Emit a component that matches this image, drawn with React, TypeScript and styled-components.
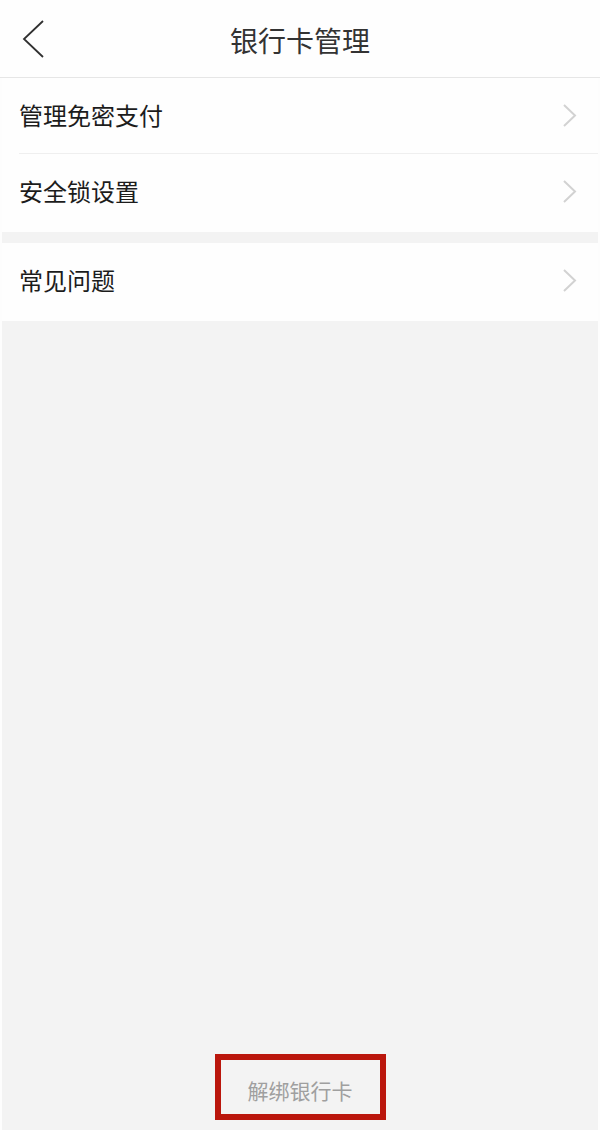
import React from "react";
import styled, { createGlobalStyle } from "styled-components";

const GlobalStyle = createGlobalStyle`
  *, *::before, *::after { box-sizing: border-box; }
  body {
    margin: 0;
    background: #fdfdfd;
    font-family: "Noto Sans CJK SC", sans-serif;
  }
`;

const Page = styled.div`
  display: flex;
  flex-direction: column;
  min-height: 100vh;
  padding: 0 2px;
`;

const Header = styled.header`
  display: grid;
  grid-template-columns: 64px 1fr 64px;
  align-items: center;
  height: 78px;
  margin: 0 -2px;
  background: #fefefe;
  border-bottom: 1px solid #e6e6e6;
`;

const BackButton = styled.button`
  display: flex;
  align-items: center;
  height: 76px;
  padding: 0 0 0 20px;
  border: 0;
  background: none;
  cursor: pointer;
`;

const Title = styled.h1`
  margin: 0;
  padding-top: 2px;
  color: #333;
  font-size: 28px;
  font-weight: 400;
  line-height: 40px;
  text-align: center;
`;

const Main = styled.main`
  flex: 1;
  display: flex;
  flex-direction: column;
  background: #f3f3f3;
`;

const Group = styled.ul`
  margin: 0 0 11px;
  padding: 0 0 3px;
  list-style: none;
  background: #fefefe;
`;

const Item = styled.li`
  & + & {
    margin-left: 17px;
    border-top: 1px solid #efefef;
  }
  & + & > a {
    padding-left: 0;
  }
`;

const RowLink = styled.a`
  display: flex;
  align-items: center;
  justify-content: space-between;
  height: 75px;
  padding: 0 20px 0 17px;
  color: #1c1c1c;
  font-size: 24px;
  line-height: 36px;
  text-decoration: none;
`;

const Label = styled.span`
  padding-bottom: 2px;
`;

const Footer = styled.footer`
  display: flex;
  justify-content: center;
  margin-top: auto;
  padding-bottom: 10px;
`;

const UnbindButton = styled.button`
  height: 66px;
  padding: 5px 27px 0;
  border: 6px solid #ba160c;
  background: transparent;
  color: #9f9f9f;
  font-family: inherit;
  font-size: 21px;
  line-height: 30px;
  cursor: pointer;
`;

const BackIcon = () => (
  <svg width="26" height="40" viewBox="0 0 26 40" fill="none" stroke="#303030" strokeWidth="1.8" aria-hidden="true">
    <path d="M23 2 L4 20 L23 38" />
  </svg>
);

const Chevron = () => (
  <svg width="16" height="24" viewBox="0 0 16 24" fill="none" stroke="#d2d2d2" strokeWidth="2" aria-hidden="true">
    <path d="M2 1 L13 11.5 L2 22" />
  </svg>
);

const groups = [["管理免密支付", "安全锁设置"], ["常见问题"]];

export default function App() {
  return (
    <>
      <GlobalStyle />
      <Page>
        <Header>
          <BackButton type="button" aria-label="返回">
            <BackIcon />
          </BackButton>
          <Title>银行卡管理</Title>
        </Header>
        <Main>
          {groups.map((rows) => (
            <Group key={rows[0]}>
              {rows.map((label) => (
                <Item key={label}>
                  <RowLink href="#">
                    <Label>{label}</Label>
                    <Chevron />
                  </RowLink>
                </Item>
              ))}
            </Group>
          ))}
          <Footer>
            <UnbindButton type="button">解绑银行卡</UnbindButton>
          </Footer>
        </Main>
      </Page>
    </>
  );
}
